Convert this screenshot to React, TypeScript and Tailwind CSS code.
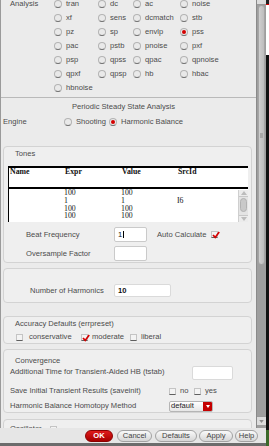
import type { ReactNode } from 'react';

const font = { fontFamily: '"Liberation Sans", Arial, sans-serif' };

function Radio({ checked = false }: { checked?: boolean }) {
  return (
    <span className="relative w-[8px] h-[8px] shrink-0 rounded-full border border-[#b4b4b4] border-b-[#6f6f6f] bg-[#e9e9e9] flex items-center justify-center">
      {checked && <span className="w-[4px] h-[4px] rounded-full bg-[#d40000]" />}
    </span>
  );
}

function Check({ checked = false }: { checked?: boolean }) {
  return (
    <span className="relative w-[7px] h-[7px] shrink-0 border border-[#c4c4c4] border-b-[#5f5f5f] bg-[#f3f3f3] flex items-center justify-center">
      {checked && (
        <svg viewBox="0 0 8 8" className="absolute left-[0px] top-[-1px] w-[8px] h-[8px]">
          <path d="M1 4 L3.2 6.4 L7.2 1" fill="none" stroke="#d40000" strokeWidth="1.7" />
        </svg>
      )}
    </span>
  );
}

function Opt({ label, checked, w }: { label: string; checked?: boolean; w: string }) {
  return (
    <div className={`flex items-center gap-[4px] ${w}`}>
      <Radio checked={checked} />
      <span>{label}</span>
    </div>
  );
}

function Group({ children, className = '' }: { children: ReactNode; className?: string }) {
  return (
    <div className={`ml-[2px] w-[249px] border border-[#d3d3d3] rounded-[4px] bg-[#efefef] ${className}`}>
      {children}
    </div>
  );
}

const rows: [string, string, string, string][] = [
  ['tran', 'dc', 'ac', 'noise'],
  ['xf', 'sens', 'dcmatch', 'stb'],
  ['pz', 'sp', 'envlp', 'pss'],
  ['pac', 'pstb', 'pnoise', 'pxf'],
  ['psp', 'qpss', 'qpac', 'qpnoise'],
  ['qpxf', 'qpsp', 'hb', 'hbac'],
];

const tones = [
  ['', '100', '100', ''],
  ['', '1', '1', 'I6'],
  ['', '100', '100', ''],
  ['', '100', '100', ''],
];

function Btn({ label, w, ml, ok }: { label: string; w: string; ml: string; ok?: boolean }) {
  return (
    <div
      className={`${w} ${ml} h-[12px] rounded-full flex items-center justify-center text-[7.6px] ${
        ok
          ? 'bg-gradient-to-b from-[#e01a1a] to-[#a80000] text-white font-bold border border-[#8a0000]'
          : 'bg-gradient-to-b from-[#fafafa] to-[#d6d6d6] text-[#444] border border-[#a2a2a2]'
      }`}
    >
      {label}
    </div>
  );
}

export default function App() {
  return (
    <div className="w-[269px] h-[446px] flex bg-[#111] overflow-hidden text-[#4b4b4b] text-[7.6px] leading-none" style={font}>
      <div className="w-[266px] flex flex-col">
        <div className="h-[428px] flex">
          {/* main panel */}
          <div className="w-[256px] h-[428px] overflow-hidden bg-[#ebebeb] border-l border-[#9a9a9a]">
            <div className="-mt-[3px]">
              {rows.map((r, i) => (
                <div key={i} className="flex h-[14px] items-center">
                  <div className="w-[53px] pl-[9px]">{i === 0 ? 'Analysis' : ''}</div>
                  <Opt label={r[0]} w="w-[44px]" />
                  <Opt label={r[1]} w="w-[35px]" />
                  <Opt label={r[2]} w="w-[47px]" />
                  <Opt label={r[3]} w="w-[60px]" checked={r[3] === 'pss'} />
                </div>
              ))}
              <div className="flex h-[14px] items-center">
                <div className="w-[53px]" />
                <Opt label="hbnoise" w="w-[60px]" />
              </div>
            </div>
            <div className="mt-[2px] border-t border-[#b9b9b9]" />

            <div className="h-[18px] flex items-center pl-[71px]">Periodic Steady State Analysis</div>
            <div className="h-[12px] flex items-center">
              <div className="w-[63px] pl-[2px]">Engine</div>
              <Opt label="Shooting" w="w-[45px]" />
              <Opt label="Harmonic Balance" w="w-[90px]" checked />
            </div>

            {/* Tones */}
            <Group className="mt-[18px] pb-[1px]">
              <div className="h-[14px] flex items-center pl-[11px]">Tones</div>
              <div className="mt-[5px] ml-[4px] w-[240px]" style={{ fontFamily: '"Liberation Serif", "Times New Roman", serif' }}>
                <div className="h-[21px] bg-white border-t-2 border-l border-black">
                  <div className="flex h-[8px] items-center font-bold text-[#111] text-[7.8px]">
                    <div className="w-[56px] pl-[1px]">Name</div>
                    <div className="w-[57px]">Expr</div>
                    <div className="w-[56px]">Value</div>
                    <div>SrcId</div>
                  </div>
                </div>
                <div className="h-[35px] bg-white border-t-2 border-l border-black flex overflow-hidden">
                  <div className="flex-1 text-[#111] text-[7.8px]">
                    {tones.map((t, i) => (
                      <div key={i} className="flex h-[7.8px] items-center">
                        <div className="w-[55px]">{t[0]}</div>
                        <div className="w-[57px]">{t[1]}</div>
                        <div className="w-[56px]">{t[2]}</div>
                        <div>{t[3]}</div>
                      </div>
                    ))}
                  </div>
                  <div className="w-[10px] flex flex-col bg-[#e4e4e4] border-l border-[#cfcfcf] mt-[1px]">
                    <div className="h-[7px] flex items-center justify-center bg-[#ececec] border-b border-[#c8c8c8]">
                      <svg viewBox="0 0 6 4" className="w-[6px] h-[4px]"><path d="M0 4 L3 0 L6 4 Z" fill="#bcbcbc" /></svg>
                    </div>
                    <div className="mx-[1px] mt-[1px] h-[14px] rounded-[4px] bg-[#c9c9c9] border border-[#b2b2b2]" />
                    <div className="flex-1" />
                    <div className="h-[7px] flex items-center justify-center bg-[#ececec] border-t border-[#c8c8c8]">
                      <svg viewBox="0 0 6 4" className="w-[6px] h-[4px]"><path d="M0 0 L3 4 L6 0 Z" fill="#bcbcbc" /></svg>
                    </div>
                  </div>
                </div>
              </div>
              <div className="mt-[5px] flex h-[15px] items-center">
                <div className="w-[110px] pl-[22px]">Beat Frequency</div>
                <div className="w-[33px] h-[15px] bg-white border border-[#cacaca] rounded-[2px] flex items-center pl-[3px] text-[#111]">
                  <span className="border-r border-black pr-[1px]">1</span>
                </div>
                <span className="ml-[10px]">Auto Calculate</span>
                <span className="ml-[5px]"><Check checked /></span>
              </div>
              <div className="mt-[4px] flex h-[15px] items-center">
                <div className="w-[110px] pl-[22px]">Oversample Factor</div>
                <div className="w-[33px] h-[15px] bg-white border border-[#cacaca] rounded-[2px]" />
              </div>
            </Group>

            {/* Harmonics */}
            <Group className="mt-[5px] pt-[15px] pb-[5px]">
              <div className="flex h-[13px] items-center">
                <div className="w-[110px] pl-[26px]">Number of Harmonics</div>
                <div className="w-[57px] h-[13px] bg-white border border-[#dadada] rounded-[2px] flex items-center pl-[3px] font-bold text-[#111]">10</div>
              </div>
            </Group>

            {/* Accuracy */}
            <Group className="mt-[13px] pb-[1px]">
              <div className="h-[14px] flex items-center pl-[11px]">Accuracy Defaults (errpreset)</div>
              <div className="mt-[1px] h-[10px] flex items-center pl-[12px]">
                <div className="w-[65px] flex items-center gap-[6px]"><Check /><span>conservative</span></div>
                <div className="w-[49px] flex items-center gap-[4px]"><Check checked /><span>moderate</span></div>
                <div className="flex items-center gap-[4px]"><Check /><span>liberal</span></div>
              </div>
            </Group>

            {/* Convergence */}
            <Group className="mt-[5px] pt-[5px]">
              <div className="h-[11px] flex items-center pl-[11px]">Convergence</div>
              <div className="flex h-[14px] items-center">
                <div className="w-[188px] pl-[6px] -mt-[2px]">Additional Time for Transient-Aided HB (tstab)</div>
                <div className="w-[41px] h-[14px] bg-white border border-[#dadada] rounded-[2px]" />
              </div>
              <div className="mt-[4px] flex h-[14px] items-center">
                <div className="w-[165px] pl-[6px]">Save Initial Transient Results (saveinit)</div>
                <div className="w-[25px] flex items-center gap-[4px]"><Check /><span>no</span></div>
                <div className="flex items-center gap-[4px]"><Check /><span>yes</span></div>
              </div>
              <div className="mt-[2px] flex h-[12px] items-center">
                <div className="w-[165px] pl-[6px]">Harmonic Balance Homotopy Method</div>
                <div className="w-[44px] h-[11px] flex bg-gradient-to-b from-white to-[#e6e6e6] border border-[#b5b5b5] rounded-[2px] overflow-hidden">
                  <span className="flex-1 flex items-center pl-[1px] text-[#222]">default</span>
                  <span className="w-[9px] bg-[#c40000] flex items-center justify-center">
                    <svg viewBox="0 0 4 3" className="w-[4px] h-[3px]"><path d="M0 0 L2 3 L4 0 Z" fill="#fff" /></svg>
                  </span>
                </div>
              </div>
            </Group>

            <Group className="mt-[6px] pt-[5px] h-[20px]">
              <div className="flex items-center h-[8px] pl-[6px]">
                <span className="w-[40px]">Oscillator</span>
                <Check />
              </div>
            </Group>
          </div>

          {/* scrollbar */}
          <div className="w-[10px] h-[428px] bg-[#9e9e9e] border-l border-[#8a8a8a] flex flex-col">
            <div className="h-[5px] bg-[#dcdcdc] border-b border-[#9a9a9a]" />
            <div className="mx-[1px] h-[260px] rounded-[4px] bg-gradient-to-r from-[#cfcfcf] to-[#bdbdbd] border border-[#a5a5a5] flex items-center justify-center">
              <span className="w-[3px] h-[5px] bg-[#a8a8a8]" />
            </div>
            <div className="flex-1" />
            <div className="h-[9px] bg-[#dcdcdc] border-t border-[#9a9a9a] flex items-center justify-center">
              <svg viewBox="0 0 6 4" className="w-[5px] h-[3px]"><path d="M0 0 L3 4 L6 0 Z" fill="#8a8a8a" /></svg>
            </div>
            <div className="h-[3px]" />
          </div>
        </div>

        {/* button bar */}
        <div className="h-[15px] bg-[#e6e6e6] flex items-center">
          <Btn label="OK" w="w-[28px]" ml="ml-[85px]" ok />
          <Btn label="Cancel" w="w-[35px]" ml="ml-[4px]" />
          <Btn label="Defaults" w="w-[42px]" ml="ml-[3px]" />
          <Btn label="Apply" w="w-[34px]" ml="ml-[2px]" />
          <Btn label="Help" w="w-[23px]" ml="ml-[2px]" />
        </div>
        <div className="flex-1 bg-[#6c6c6c]" />
      </div>

      {/* right desktop strip */}
      <div className="w-[3px] flex flex-col">
        <div className="h-[4px] bg-[#222]" />
        <div className="h-[1px] bg-[#d00000]" />
        <div className="h-[50px] bg-white" />
        <div className="flex-1 bg-[#111]" />
        <div className="h-[16px] bg-[#3c6a2a]" />
      </div>
    </div>
  );
}
